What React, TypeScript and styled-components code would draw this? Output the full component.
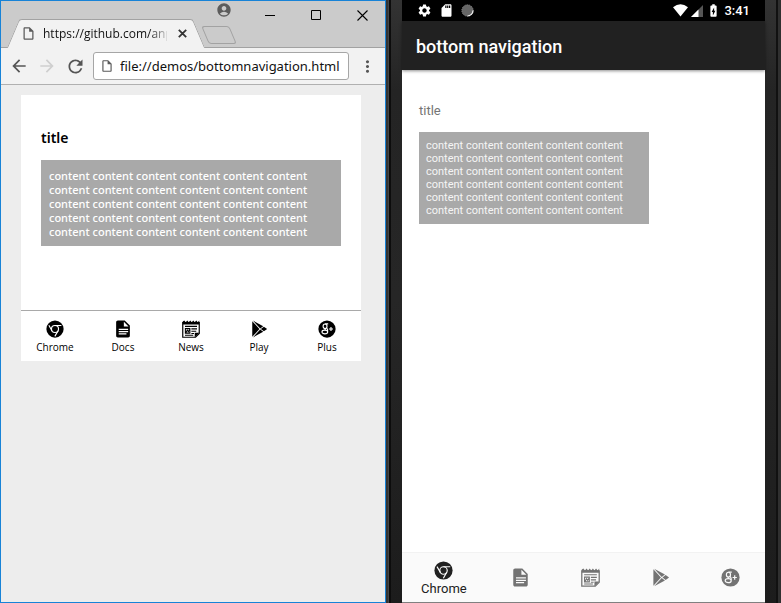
import React from "react";
import styled, { createGlobalStyle } from "styled-components";
import {
  MdAccountCircle,
  MdArrowBack,
  MdArrowForward,
  MdBatteryChargingFull,
  MdMoreVert,
  MdOutlineInsertDriveFile,
  MdRefresh,
  MdSdStorage,
  MdSettings,
} from "react-icons/md";

const GlobalStyle = createGlobalStyle`
  *, *::before, *::after { box-sizing: border-box; }
  body { margin: 0; background: #222; }
  button { margin: 0; padding: 0; border: 0; background: none; color: inherit; font: inherit; cursor: pointer; }
  h1, h2, p { margin: 0; }
  svg { display: block; flex: none; }
`;

const Desktop = styled.div`
  display: grid;
  grid-template-columns: 386fr 395fr;
  min-height: 100vh;
`;

/* ---------- Browser window ---------- */

const BrowserWindow = styled.section`
  display: flex;
  flex-direction: column;
  min-width: 0;
  border: 1px solid #1883d7;
  background: #ededed;
  font-family: "Open Sans", "Noto Sans", sans-serif;
`;

const TabStrip = styled.header`
  position: relative;
  display: flex;
  align-items: flex-end;
  height: 47px;
  padding-left: 12px;
  background: #cbcbcb;
  box-shadow: inset 0 -1px #a2a2a2;
`;

const Tab = styled.div`
  position: relative;
  isolation: isolate;
  display: flex;
  flex: none;
  align-items: center;
  gap: 7px;
  width: 186px;
  height: 29px;
  padding: 0 9px 0 8px;
  color: #5a5a5a;

  &::before,
  &::after {
    content: "";
    position: absolute;
    z-index: -1;
    top: 0;
    bottom: 0;
    width: 55%;
    background: #f2f2f2;
    border: 1px solid #a2a2a2;
    border-bottom: 0;
  }
  &::before {
    left: 0;
    border-right: 0;
    border-top-left-radius: 3px;
    transform: skewX(-23deg);
  }
  &::after {
    right: 0;
    border-left: 0;
    border-top-right-radius: 3px;
    transform: skewX(23deg);
  }
`;

const TabTitle = styled.span`
  flex: 1;
  min-width: 0;
  white-space: nowrap;
  font-size: 12px;
  line-height: 16px;
  color: #111;
  mask-image: linear-gradient(to right, #000 106px, transparent 128px);
`;

const TabClose = styled.button`
  display: grid;
  place-items: center;
  width: 16px;
  height: 16px;
  color: #333;
`;

const NewTab = styled.button`
  flex: none;
  width: 28px;
  height: 18px;
  margin: 0 0 4px 6px;
  border: 1px solid #a2a2a2;
  border-radius: 3px;
  transform: skewX(23deg);
`;

const WindowButtons = styled.div`
  position: absolute;
  top: 0;
  right: 0;
  display: flex;
`;

const WindowButton = styled.button<{ $account?: boolean }>`
  display: grid;
  place-items: center;
  width: 46px;
  height: ${(p) => (p.$account ? "18px" : "28px")};
  color: ${(p) => (p.$account ? "#5c5c5c" : "#000")};
`;

const Toolbar = styled.div`
  display: flex;
  align-items: center;
  height: 37px;
  padding: 0 8px 0 4px;
  border-bottom: 1px solid #b0b0b0;
  background: #f2f2f2;
`;

const ToolButton = styled.button<{ $muted?: boolean }>`
  display: grid;
  place-items: center;
  width: 28px;
  height: 28px;
  color: ${(p) => (p.$muted ? "#cfcfcf" : "#555")};
`;

const MenuButton = styled(ToolButton)`
  width: 20px;
  margin-left: 8px;
`;

const AddressBar = styled.label`
  display: flex;
  flex: 1;
  align-items: center;
  gap: 6px;
  min-width: 0;
  height: 28px;
  margin-left: 4px;
  padding: 0 4px 0 6px;
  border: 1px solid #a6a6a6;
  border-radius: 3px;
  background: #fff;
  color: #5a5a5a;
`;

const AddressInput = styled.input`
  flex: 1;
  min-width: 0;
  padding: 0;
  border: 0;
  outline: 0;
  background: none;
  color: #111;
  font-family: "Noto Sans", sans-serif;
  font-size: 13px;
  line-height: 20px;
`;

const DemoPage = styled.main`
  display: flex;
  flex-direction: column;
  margin: 10px 24px 0 20px;
  background: #fff;
`;

const DemoBody = styled.div`
  height: 215px;
  padding: 33px 20px 0;
`;

const DemoTitle = styled.h1`
  margin-bottom: 12px;
  font-family: "Noto Sans", sans-serif;
  font-size: 14px;
  font-weight: 600;
  line-height: 20px;
  color: #000;
`;

const DemoContent = styled.div`
  padding: 9px 8px 7px;
  background: #a9a9a9;
  color: #fff;
  font-family: "Noto Sans", sans-serif;
  font-size: 11px;
  font-weight: 500;
  line-height: 14px;
`;

const DemoNav = styled.nav`
  display: grid;
  grid-template-columns: repeat(5, 1fr);
  height: 51px;
  border-top: 1px solid #a9a9a9;
`;

const DemoNavItem = styled.button`
  display: flex;
  flex-direction: column;
  align-items: center;
  gap: 2px;
  padding-top: 9px;
  color: #000;
  font-family: "Open Sans", "Noto Sans", sans-serif;
  font-size: 10px;
  line-height: 14px;
`;

/* ---------- Phone ---------- */

const Phone = styled.section`
  display: flex;
  min-width: 0;
  padding: 0 16px;
  background:
    linear-gradient(to right, #333 0 2px, #454545 2px 3px, #0c0c0c 3px 5px, transparent 5px),
    linear-gradient(to left, #303030 0 3px, #111 3px 5px, transparent 5px),
    linear-gradient(to bottom, #333 0, #242424 90px, #262626 300px, #1c1c1c 100%);
  font-family: Roboto, sans-serif;
`;

const Screen = styled.div`
  display: flex;
  flex: 1;
  flex-direction: column;
  min-width: 0;
  border-bottom: 1px solid #808080;
  background: #fff;
`;

const StatusBar = styled.div`
  display: flex;
  align-items: center;
  justify-content: space-between;
  height: 21px;
  padding: 0 15px;
  background: #000;
  color: #fff;
`;

const StatusGroup = styled.div<{ $gap: number }>`
  display: flex;
  align-items: center;
  gap: ${(p) => p.$gap}px;
`;

const Clock = styled.time`
  font-size: 13px;
  font-weight: 500;
  line-height: 20px;
`;

const AppBar = styled.header`
  height: 49px;
  padding: 16px 14px;
  background: #212121;
  box-shadow: 0 1px 3px rgba(0, 0, 0, 0.45);
  color: #fff;
`;

const AppTitle = styled.h2`
  font-size: 18px;
  font-weight: 500;
  line-height: 20px;
`;

const AppBody = styled.div`
  flex: 1;
  padding: 32px 17px 0;
`;

const AppCaption = styled.p`
  margin-bottom: 13px;
  color: #757575;
  font-size: 13px;
  line-height: 17px;
`;

const AppContent = styled.div`
  max-width: 230px;
  padding: 7px;
  background: #a9a9a9;
  color: #f5f5f5;
  font-size: 11px;
  line-height: 13px;
`;

const AppNav = styled.nav`
  display: flex;
  height: 50px;
  border-top: 1px solid #f2f2f2;
  background: #fafafa;
`;

const AppNavItem = styled.button<{ $active?: boolean }>`
  display: flex;
  flex: ${(p) => (p.$active ? 6 : 5)} 1 0;
  flex-direction: column;
  align-items: center;
  justify-content: center;
  gap: 1px;
  min-width: 0;
  padding-top: ${(p) => (p.$active ? "2px" : "0")};
  color: ${(p) => (p.$active ? "#212121" : "#737373")};
  --paper: #fafafa;
  font-size: 13px;
  line-height: 16px;
`;

/* ---------- Drawings ---------- */

type IconProps = { size: number };

const ChromeIcon = ({ size }: IconProps) => (
  <svg width={size} height={size} viewBox="0 0 24 24" aria-hidden="true">
    <circle cx="12" cy="12" r="11.5" fill="currentColor" />
    <g fill="none" stroke="var(--paper, #fff)" strokeWidth="1.5">
      <circle cx="12" cy="12" r="4.7" />
      <path d="M12 7.3H20.5M7.9 14.3L3.8 7.1M16.1 14.3L11.8 21.8" />
    </g>
  </svg>
);

const DocsIcon = ({ size }: IconProps) => (
  <svg width={size} height={size} viewBox="1.5 1.5 21 21" fill="currentColor" aria-hidden="true">
    <path d="M14 2H6C4.9 2 4 2.9 4 4V20C4 21.1 4.9 22 6 22H18C19.1 22 20 21.1 20 20V8ZM16 18.4H7V17H16ZM18 15.8H7V14.4H18ZM18 13.2H7V11.8H18ZM13 9V3.5L18.5 9Z" />
  </svg>
);

const NewsIcon = ({ size }: IconProps) => (
  <svg width={size} height={size} viewBox="0 0 24 24" aria-hidden="true">
    <path
      d="M1 3.5H23V18L18 23H1Z"
      fill="none"
      stroke="currentColor"
      strokeWidth="1.6"
    />
    <path
      d="M1 6V2L3 .5L5 3L7 .5L9 3L11 .5L13 3L15 .5L17 3L19 .5L21 3L23 .5V6Z"
      fill="currentColor"
    />
    <path d="M17 23V17H23Z" fill="currentColor" />
    <path
      d="M4 8.5H20M12.5 11.8H20M12.5 15H19M12.5 18H16M4 20.2H15"
      stroke="currentColor"
      strokeWidth="1.4"
    />
    <path
      d="M4.5 11.5H10.5V17.5H4.5ZM5 17L7 13.5L8.5 15.5L10 13"
      fill="none"
      stroke="currentColor"
      strokeWidth="1.4"
    />
  </svg>
);

const PlayIcon = ({ size }: IconProps) => (
  <svg width={size} height={size} viewBox="0 0 24 24" fill="currentColor" aria-hidden="true">
    <path d="M3 1.6V22.4L12.6 12Z" />
    <path d="M4 .8L17.6 8.2L13.6 11.3Z" />
    <path d="M4 23.2L17.6 15.8L13.6 12.7Z" />
    <path d="M18.5 8.9L22.8 12L18.5 15.1L14.5 12Z" />
  </svg>
);

const PlusIcon = ({ size }: IconProps) => (
  <svg width={size} height={size} viewBox="0 0 24 24" aria-hidden="true">
    <circle cx="12" cy="12" r="11.5" fill="currentColor" />
    <g fill="none" stroke="var(--paper, #fff)" strokeWidth="1.5">
      <ellipse cx="9.4" cy="8.4" rx="2.6" ry="3" />
      <path d="M9.5 5.2H13.6M11.4 10.6C12.8 12 13.3 13.3 12.8 15" />
      <ellipse cx="9.1" cy="16" rx="3.8" ry="2.5" />
      <path d="M8.8 11.4L10 13.5M14.6 12H20M17.3 9.3V14.7" />
    </g>
  </svg>
);

const WifiIcon = () => (
  <svg width="15" height="13" viewBox="0 0 15 13" fill="currentColor" aria-hidden="true">
    <path d="M0 3.2Q7.5-2.8 15 3.2L7.5 12.5Z" />
  </svg>
);

const SignalIcon = () => (
  <svg width="12" height="12" viewBox="0 0 12 12" aria-hidden="true">
    <path d="M12 0V12H0Z" fill="#555" />
    <path d="M7.5 4.5V12H0Z" fill="#fff" />
  </svg>
);

const SyncIcon = () => (
  <svg width="13" height="13" viewBox="0 0 13 13" aria-hidden="true">
    <circle cx="6.5" cy="6.5" r="5.7" fill="#666" stroke="#8a8a8a" strokeDasharray="1 1" />
    <path d="M12 6.5A5.5 5.5 0 0 1 6.5 12" fill="none" stroke="#eee" strokeWidth="1.2" />
  </svg>
);

const destinations = [
  { label: "Chrome", Icon: ChromeIcon },
  { label: "Docs", Icon: DocsIcon },
  { label: "News", Icon: NewsIcon },
  { label: "Play", Icon: PlayIcon },
  { label: "Plus", Icon: PlusIcon },
];

const repeatedLines = (lines: number, words: number) =>
  Array.from({ length: lines }, (_, i) => (
    <p key={i}>{Array(words).fill("content").join(" ")}</p>
  ));

function Browser() {
  return (
    <BrowserWindow>
      <TabStrip>
        <Tab>
          <MdOutlineInsertDriveFile size={15} />
          <TabTitle>https://github.com/anpl</TabTitle>
          <TabClose aria-label="Close tab">
            <svg width="9" height="9" viewBox="0 0 9 9" stroke="currentColor" strokeWidth="1.8">
              <path d="M.8 .8L8.2 8.2M8.2 .8L.8 8.2" />
            </svg>
          </TabClose>
        </Tab>
        <NewTab aria-label="New tab" />
        <WindowButtons>
          <WindowButton $account aria-label="Account">
            <MdAccountCircle size={16} />
          </WindowButton>
          <WindowButton aria-label="Minimize">
            <svg width="10" height="11" viewBox="0 0 10 11" stroke="currentColor">
              <path d="M0 5.5H10" />
            </svg>
          </WindowButton>
          <WindowButton aria-label="Maximize">
            <svg width="10" height="10" viewBox="0 0 10 10" stroke="currentColor" fill="none">
              <path d="M.5 .5H9.5V9.5H.5Z" />
            </svg>
          </WindowButton>
          <WindowButton aria-label="Close">
            <svg width="11" height="11" viewBox="0 0 11 11" stroke="currentColor" strokeWidth="1.1">
              <path d="M.5 .5L10.5 10.5M10.5 .5L.5 10.5" />
            </svg>
          </WindowButton>
        </WindowButtons>
      </TabStrip>
      <Toolbar>
        <ToolButton aria-label="Back">
          <MdArrowBack size={20} />
        </ToolButton>
        <ToolButton $muted aria-label="Forward">
          <MdArrowForward size={20} />
        </ToolButton>
        <ToolButton aria-label="Reload">
          <MdRefresh size={21} />
        </ToolButton>
        <AddressBar>
          <MdOutlineInsertDriveFile size={14} />
          <AddressInput aria-label="Address" defaultValue="file://demos/bottomnavigation.html" />
        </AddressBar>
        <MenuButton aria-label="Menu">
          <MdMoreVert size={19} />
        </MenuButton>
      </Toolbar>
      <DemoPage>
        <DemoBody>
          <DemoTitle>title</DemoTitle>
          <DemoContent>{repeatedLines(5, 6)}</DemoContent>
        </DemoBody>
        <DemoNav>
          {destinations.map(({ label, Icon }) => (
            <DemoNavItem key={label}>
              <Icon size={18} />
              {label}
            </DemoNavItem>
          ))}
        </DemoNav>
      </DemoPage>
    </BrowserWindow>
  );
}

function PhoneApp() {
  return (
    <Phone>
      <Screen>
        <StatusBar>
          <StatusGroup $gap={7}>
            <MdSettings size={15} />
            <MdSdStorage size={15} />
            <SyncIcon />
          </StatusGroup>
          <StatusGroup $gap={3}>
            <WifiIcon />
            <SignalIcon />
            <MdBatteryChargingFull size={15} />
            <Clock>3:41</Clock>
          </StatusGroup>
        </StatusBar>
        <AppBar>
          <AppTitle>bottom navigation</AppTitle>
        </AppBar>
        <AppBody>
          <AppCaption>title</AppCaption>
          <AppContent>{repeatedLines(6, 5)}</AppContent>
        </AppBody>
        <AppNav>
          {destinations.map(({ label, Icon }, i) => (
            <AppNavItem key={label} $active={i === 0} aria-label={label}>
              <Icon size={19} />
              {i === 0 && label}
            </AppNavItem>
          ))}
        </AppNav>
      </Screen>
    </Phone>
  );
}

export default function App() {
  return (
    <>
      <GlobalStyle />
      <Desktop>
        <Browser />
        <PhoneApp />
      </Desktop>
    </>
  );
}
